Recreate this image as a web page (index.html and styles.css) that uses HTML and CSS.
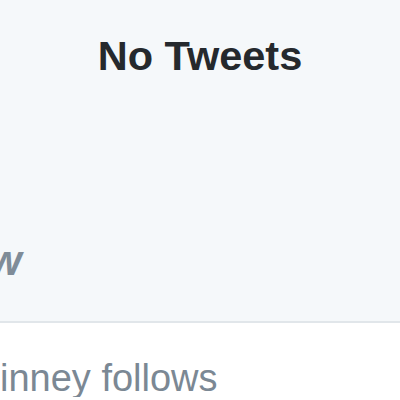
FILE: index.html
```html
<!DOCTYPE html>
<html lang="en">
<head>
    <meta charset="UTF-8">
    <meta name="viewport" content="width=device-width, initial-scale=1.0">
    <title>No Tweets</title>
    <link rel="stylesheet" href="styles.css">
</head>
<body>
    <div class="empty-state">
        <h2 class="empty-title">No Tweets</h2>
        <p class="empty-hint">w</p>
    </div>

    <div class="follows">
        <p class="follows-text">inney follows</p>
    </div>
</body>
</html>
```

FILE: styles.css
```css
body {
    font-family: "Liberation Sans", Arial, sans-serif;
    margin: 0;
    background-color: #fff;
    overflow: hidden;
}

.empty-state {
    display: flex;
    flex-direction: column;
    height: 323px;
    box-sizing: border-box;
    padding-top: 35px;
    background-color: #f5f8fa;
    border-bottom: 2px solid #e1e6ea;
}

.empty-title {
    margin: 0;
    font-size: 41.5px;
    line-height: 1;
    font-weight: bold;
    text-align: center;
    color: #25292d;
}

.empty-hint {
    margin: 163px 0 0;
    font-size: 42px;
    line-height: 1;
    font-weight: bold;
    font-style: italic;
    text-indent: -11px;
    color: #7f8c98;
}

.follows {
    padding-top: 36px;
}

.follows-text {
    margin: 0;
    font-size: 38px;
    line-height: 1;
    color: #7b8894;
}
```
